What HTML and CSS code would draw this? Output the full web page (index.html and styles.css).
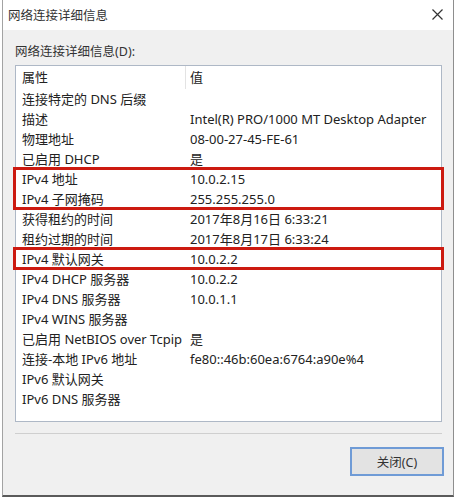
FILE: index.html
```html
<!DOCTYPE html>
<html lang="zh-CN">
<head>
<meta charset="utf-8">
<title>网络连接详细信息</title>
<link rel="stylesheet" href="styles.css">
</head>
<body>
<div class="window">
  <div class="titlebar">
    <span class="title">网络连接详细信息</span>
    <svg class="close" width="11" height="11" viewBox="0 0 11 11"><path d="M0.5 0.5 L10.5 10.5 M10.5 0.5 L0.5 10.5" stroke="#333" stroke-width="1.2" fill="none"/></svg>
  </div>
  <div class="content">
    <div class="label">网络连接详细信息(D):</div>
    <div class="listbox">
      <div class="row header"><span class="c1">属性</span><span class="c2">值</span></div>
      <div class="row"><span class="c1">连接特定的 DNS 后缀</span><span class="c2"></span></div>
      <div class="row"><span class="c1">描述</span><span class="c2">Intel(R) PRO/1000 MT Desktop Adapter</span></div>
      <div class="row"><span class="c1">物理地址</span><span class="c2">08-00-27-45-FE-61</span></div>
      <div class="row"><span class="c1">已启用 DHCP</span><span class="c2">是</span></div>
      <div class="group">
        <div class="row"><span class="c1">IPv4 地址</span><span class="c2">10.0.2.15</span></div>
        <div class="row"><span class="c1">IPv4 子网掩码</span><span class="c2">255.255.255.0</span></div>
      </div>
      <div class="row"><span class="c1">获得租约的时间</span><span class="c2">2017年8月16日 6:33:21</span></div>
      <div class="row"><span class="c1">租约过期的时间</span><span class="c2">2017年8月17日 6:33:24</span></div>
      <div class="group">
        <div class="row"><span class="c1">IPv4 默认网关</span><span class="c2">10.0.2.2</span></div>
      </div>
      <div class="row"><span class="c1">IPv4 DHCP 服务器</span><span class="c2">10.0.2.2</span></div>
      <div class="row"><span class="c1">IPv4 DNS 服务器</span><span class="c2">10.0.1.1</span></div>
      <div class="row"><span class="c1">IPv4 WINS 服务器</span><span class="c2"></span></div>
      <div class="row"><span class="c1">已启用 NetBIOS over Tcpip</span><span class="c2">是</span></div>
      <div class="row"><span class="c1">连接-本地 IPv6 地址</span><span class="c2">fe80::46b:60ea:6764:a90e%4</span></div>
      <div class="row"><span class="c1">IPv6 默认网关</span><span class="c2"></span></div>
      <div class="row"><span class="c1">IPv6 DNS 服务器</span><span class="c2"></span></div>
    </div>
    <div class="separator"></div>
    <div class="footer">
      <button class="btn">关闭(C)</button>
    </div>
  </div>
</div>
</body>
</html>
```
FILE: styles.css
```css
html, body {
  margin: 0;
  padding: 0;
  background: #ffffff;
}
body {
  font-family: "Noto Sans", "Noto Sans CJK SC", sans-serif;
  font-size: 13px;
  color: #222222;
}
.window {
  box-sizing: border-box;
  width: 452px;
  height: 497px;
  margin-left: 2px;
  border-left: 1px solid #a3a3a3;
  border-right: 1px solid #8e8e8e;
  border-bottom: 2px solid #5a5a5a;
  background: #f0f0f0;
  display: flex;
  flex-direction: column;
}
.titlebar {
  height: 30px;
  background: #ffffff;
  display: flex;
  align-items: center;
  justify-content: space-between;
  padding: 0 10px 0 5px;
}
.title {
  color: #333;
  font-size: 12.5px;
  margin-top: -1px;
}
.close {
  display: block;
  margin-top: -2px;
}
.content {
  padding: 0 11px 0 12px;
  display: flex;
  flex-direction: column;
}
.label {
  margin-top: 14px;
  line-height: 16px;
  height: 16px;
  font-size: 12.5px;
  color: #333;
}
.listbox {
  margin-top: 5px;
  box-sizing: border-box;
  height: 357px;
  background: #ffffff;
  border: 1px solid #aeb8c6;
}
.row {
  display: grid;
  grid-template-columns: 170px 1fr;
  height: 20px;
  line-height: 20px;
  white-space: nowrap;
}
.row.header {
  height: 23px;
  line-height: 23px;
}
.row .c1 {
  padding-left: 6px;
  box-sizing: border-box;
  overflow: visible;
}
.row .c2 {
  padding-left: 4px;
}
.row.header .c1 {
  border-right: 1px solid #e3e3e3;
}
.group {
  position: relative;
}
.group::after {
  content: "";
  position: absolute;
  top: -2px;
  bottom: -1px;
  left: -3px;
  right: -3px;
  border: 3px solid #cc1a10;
  pointer-events: none;
}
.separator {
  margin-top: 11px;
  height: 1px;
  background: #cfcfcf;
}
.footer {
  display: flex;
  justify-content: flex-end;
  margin-top: 13px;
  margin-right: -2px;
}
.btn {
  box-sizing: border-box;
  width: 94px;
  height: 29px;
  border: 2px solid #6f9bd6;
  background: #e3e3e3;
  font-family: "Noto Sans", "Noto Sans CJK SC", sans-serif;
  font-size: 12.5px;
  color: #333;
  padding: 0;
}
```
